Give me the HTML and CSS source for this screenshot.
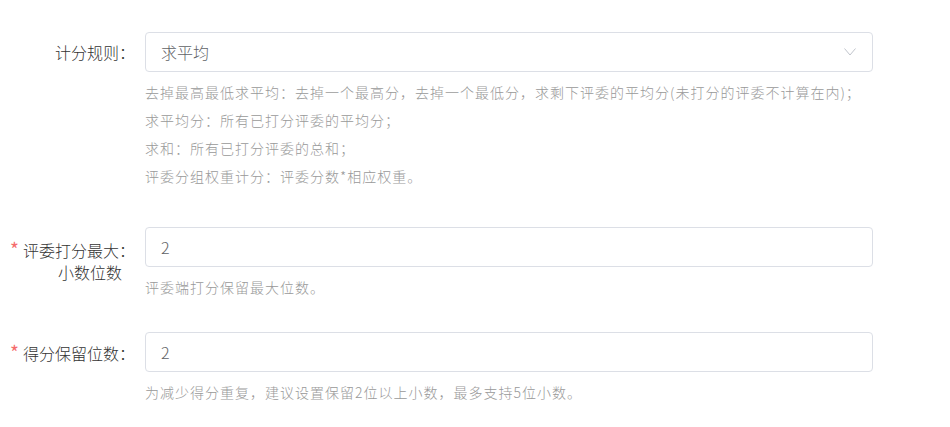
FILE: index.html
```html
<!DOCTYPE html>
<html lang="zh">
<head>
    <meta charset="UTF-8">
    <meta name="viewport" content="width=device-width, initial-scale=1.0">
    <title>计分设置</title>
    <link rel="stylesheet" href="styles.css">
</head>
<body>
    <div class="form">

        <!-- 计分规则 -->
        <div class="form-item item-rule">
            <label class="form-label">计分规则<span class="colon">：</span></label>
            <div class="form-control">
                <div class="select">
                    <span class="select-value">求平均</span>
                    <svg class="select-arrow" width="12" height="8" viewBox="0 0 12 8">
                        <polyline points="0.5,0.5 6,7 11.5,0.5" fill="none" stroke="#c0c4cc" stroke-width="1"/>
                    </svg>
                </div>
                <div class="form-tip">
                    <p>去掉最高最低求平均：去掉一个最高分，去掉一个最低分，求剩下评委的平均分(未打分的评委不计算在内)；</p>
                    <p>求平均分：所有已打分评委的平均分；</p>
                    <p>求和：所有已打分评委的总和；</p>
                    <p>评委分组权重计分：评委分数*相应权重。</p>
                </div>
            </div>
        </div>

        <!-- 评委打分最大小数位数 -->
        <div class="form-item">
            <label class="form-label is-required multi-line">评委打分最大<span class="colon">：</span><br><span class="label-rest">小数位数</span></label>
            <div class="form-control">
                <input class="input" type="text" value="2">
                <div class="form-tip">
                    <p>评委端打分保留最大位数。</p>
                </div>
            </div>
        </div>

        <!-- 得分保留位数 -->
        <div class="form-item">
            <label class="form-label is-required">得分保留位数<span class="colon">：</span></label>
            <div class="form-control">
                <input class="input" type="text" value="2">
                <div class="form-tip">
                    <p>为减少得分重复，建议设置保留2位以上小数，最多支持5位小数。</p>
                </div>
            </div>
        </div>

    </div>
</body>
</html>
```

FILE: styles.css
```css
body {
    margin: 0;
    padding: 0;
    background-color: #fff;
    font-family: "Noto Sans CJK SC", "Noto Sans", sans-serif;
    font-weight: 300;
    color: #333;
}

.form {
    width: 873px;
    padding-top: 32px;
}

.form-item {
    display: flex;
    align-items: flex-start;
    margin-bottom: 31px;
}

.item-rule {
    margin-bottom: 37px;
}

.form-label {
    width: 145px;
    flex-shrink: 0;
    box-sizing: border-box;
    padding-right: 10px;
    text-align: right;
    font-size: 16px;
    line-height: 40px;
    color: #333;
}

/* 冒号居中显示 */
.colon {
    font-family: "Noto Sans CJK TC", sans-serif;
}

.form-label.multi-line {
    line-height: 22px;
    padding-top: 11px;
}

.label-rest {
    margin-right: 13px;
}

.form-label.is-required::before {
    content: "*";
    color: #f56c6c;
    font-size: 19px;
    font-weight: 400;
    margin-right: 4px;
}

.form-control {
    flex: 1;
}

.select,
.input {
    display: flex;
    align-items: center;
    justify-content: space-between;
    width: 100%;
    height: 40px;
    box-sizing: border-box;
    padding: 0 15px;
    border: 1px solid #dcdfe6;
    border-radius: 4px;
    font-family: inherit;
    font-weight: 300;
    font-size: 16px;
    color: #606266;
    background-color: #fff;
    outline: none;
}

.select-value {
    line-height: 38px;
}

.select-arrow {
    margin-right: 1px;
}

.form-tip {
    margin-top: 6px;
}

.form-tip p {
    margin: 0;
    font-size: 14px;
    line-height: 28px;
    letter-spacing: 1px;
    color: #999;
    white-space: nowrap;
}
```
